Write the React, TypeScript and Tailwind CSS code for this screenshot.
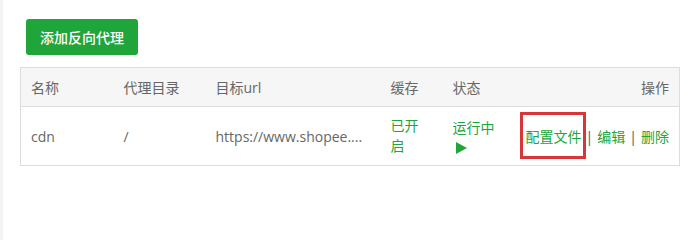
import React from "react";

const FONT = { fontFamily: '"Open Sans", "Noto Sans CJK SC", sans-serif' };

function PlayIcon() {
  return (
    <svg width="11" height="12" viewBox="0 0 11 12" className="inline-block">
      <polygon points="0,0 11,6 0,12" fill="#20a53a" />
    </svg>
  );
}

export default function App() {
  return (
    <div className="w-[690px] h-[240px] bg-white flex" style={FONT}>
      {/* faint edge on the left */}
      <div className="w-[3px] h-full bg-[#f3f3f3]" />
      <div className="flex-1 pl-[17px] pt-[19px]">
        <button className="ml-[6px] h-[36px] w-[112px] rounded-[3px] bg-[#20a53a] text-white text-[14px] font-medium">
          添加反向代理
        </button>

        <table className="mt-[12px] w-[660px] table-fixed border border-[#ddd] text-[14px] text-[#666]">
          <colgroup>
            <col className="w-[93px]" />
            <col className="w-[92px]" />
            <col className="w-[175px]" />
            <col className="w-[62px]" />
            <col className="w-[70px]" />
            <col />
          </colgroup>
          <thead>
            <tr className="h-[39px] bg-[#f6f6f6] border-b border-[#ddd]">
              <th className="px-[10px] text-left font-normal">名称</th>
              <th className="px-[10px] text-left font-normal">代理目录</th>
              <th className="px-[10px] text-left font-normal">目标url</th>
              <th className="px-[10px] text-left font-normal">缓存</th>
              <th className="px-[10px] text-left font-normal">状态</th>
              <th className="px-[10px] text-right font-normal">操作</th>
            </tr>
          </thead>
          <tbody>
            <tr className="h-[59px]">
              <td className="px-[10px]">cdn</td>
              <td className="px-[10px]">/</td>
              <td className="px-[10px] whitespace-nowrap overflow-hidden">https://www.shopee....</td>
              <td className="px-[10px] leading-[20px] text-[#20a53a]">
                已开
                <br />
                启
              </td>
              <td className="px-[10px] leading-[20px] text-[#20a53a]">
                <div>运行中</div>
                <div className="pt-[1px] pl-[3px] leading-none">
                  <PlayIcon />
                </div>
              </td>
              <td className="px-[10px] text-right whitespace-nowrap">
                <span className="relative text-[#20a53a]">
                  配置文件
                  <span className="absolute -left-[6px] -right-[4px] -top-[15px] -bottom-[13px] border-[3px] border-[#d9363a]" />
                </span>
                <span className="text-[#555] mx-[4px]">|</span>
                <span className="text-[#20a53a]">编辑</span>
                <span className="text-[#555] mx-[4px]">|</span>
                <span className="text-[#20a53a]">删除</span>
              </td>
            </tr>
          </tbody>
        </table>
      </div>
    </div>
  );
}
